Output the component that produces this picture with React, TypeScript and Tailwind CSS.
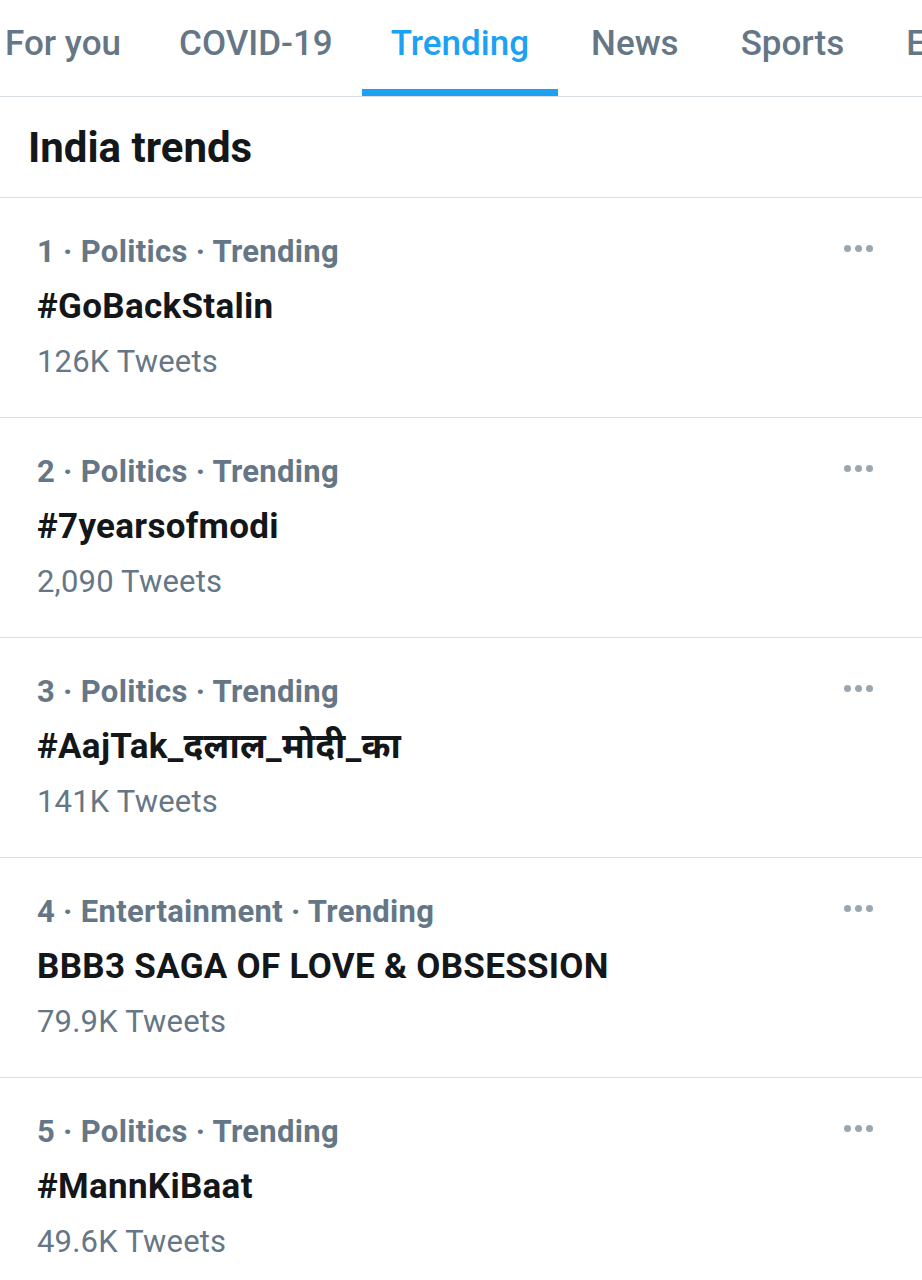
import React from "react";

const tabs = ["For you", "COVID-19", "Trending", "News", "Sports", "Entertainment"];

const trends = [
  { rank: 1, topic: "Politics", tag: "#GoBackStalin", count: "126K Tweets" },
  { rank: 2, topic: "Politics", tag: "#7yearsofmodi", count: "2,090 Tweets" },
  { rank: 3, topic: "Politics", tag: "#AajTak_दलाल_मोदी_का", count: "141K Tweets" },
  { rank: 4, topic: "Entertainment", tag: "BBB3 SAGA OF LOVE & OBSESSION", count: "79.9K Tweets" },
  { rank: 5, topic: "Politics", tag: "#MannKiBaat", count: "49.6K Tweets" },
];

const TrendRow = ({ rank, topic, tag, count }: (typeof trends)[number]) => (
  <div className="relative border-b border-[#dadfe3] pl-[37px] pr-[40px] pt-[26px] pb-[28px]">
    <div className="text-[31px] leading-[55px] tracking-[0.3px] font-bold text-[#657786]">
      {rank} · {topic} · Trending
    </div>
    <div className="text-[35px] leading-[56px] tracking-[0.3px] font-bold text-[#14171a]">{tag}</div>
    <div className="text-[31px] leading-[54px] tracking-[0.2px] text-[#657786]">{count}</div>
    <div className="absolute right-[49px] top-[47px] flex gap-[4px]">
      <span className="h-[7px] w-[7px] rounded-full bg-[#9aa6b0]" />
      <span className="h-[7px] w-[7px] rounded-full bg-[#9aa6b0]" />
      <span className="h-[7px] w-[7px] rounded-full bg-[#9aa6b0]" />
    </div>
  </div>
);

export default function App() {
  return (
    <div className="min-h-screen w-[922px] overflow-hidden bg-white font-['Roboto','Noto_Sans',sans-serif]">
      <div className="flex border-b border-[#dadfe3] -ml-[24px] whitespace-nowrap">
        {tabs.map((t, i) => (
          <div
            key={t}
            className={
              t === "Trending"
                ? "h-[96px] shrink-0 px-[29px] pt-[26px] text-[35px] leading-[36px] font-medium text-[#1da1f2] border-b-[7px] border-[#1da1f2]"
                : i > 2
                  ? "h-[96px] shrink-0 ml-[4px] px-[29px] pt-[26px] text-[35px] leading-[36px] font-medium text-[#657786] border-b-[7px] border-transparent"
                  : "h-[96px] shrink-0 px-[29px] pt-[26px] text-[35px] leading-[36px] font-medium text-[#657786] border-b-[7px] border-transparent"
            }
          >
            {t}
          </div>
        ))}
      </div>
      <div className="border-b border-[#dadfe3] pl-[28px] pt-[26px] pb-[24px]">
        <h1 className="text-[42px] leading-[50px] font-bold text-[#14171a]">India trends</h1>
      </div>
      {trends.map((t) => (
        <TrendRow key={t.rank} {...t} />
      ))}
    </div>
  );
}
